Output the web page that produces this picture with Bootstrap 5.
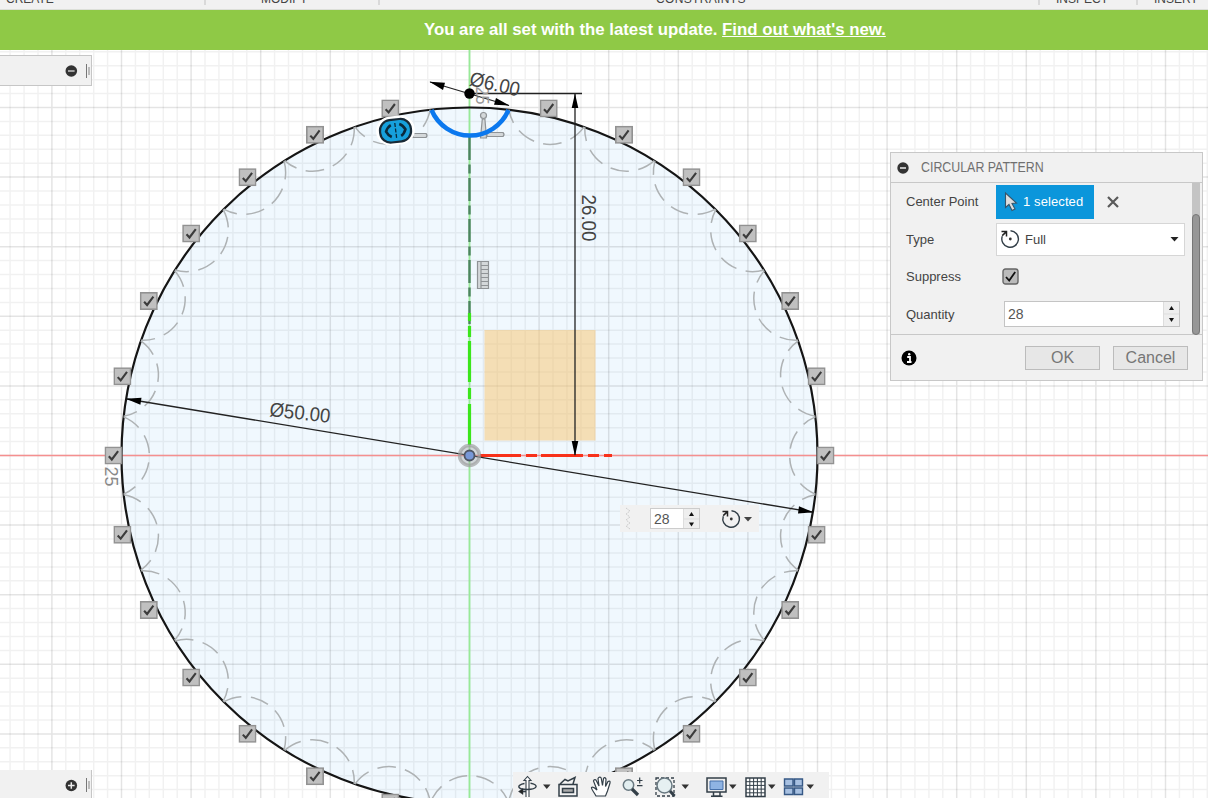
<!DOCTYPE html>
<html lang="en">
<head>
<meta charset="utf-8">
<title>Circular Pattern</title>
<link href="https://cdn.jsdelivr.net/npm/bootstrap@5.3.0/dist/css/bootstrap.min.css" rel="stylesheet">
<script src="https://cdn.jsdelivr.net/npm/bootstrap@5.3.0/dist/js/bootstrap.bundle.min.js"></script>
<style>
body{font-family:"Liberation Sans",Arial,sans-serif;font-size:12px;color:#444;background:#fff}
svg{display:block}
svg text{font-family:"Liberation Sans",Arial,sans-serif}
.ribbon{height:10px;background:#f1f1f1;font-size:12px;line-height:14px;border-bottom:1px solid #dcdfd8}
.ribbon span{display:block;margin-top:-8px}
.ribbon .sep{width:2px;height:5px;background:#d9d9d9;flex:none}
.notice{height:40px;background:#8fc946;color:#fff;font-size:16.8px;font-weight:bold;padding-left:424px;flex:none}
.notice a{color:#fff}
.side{left:0;width:92px;background:#f1f1f1;border:1px solid #c6c6c6;border-left:0}
.side.upper{top:5px;height:31px}
.side.lower{bottom:0;height:28px;border-top:0;border-bottom:0}
.dlg{left:890px;top:102px;width:313px;height:229px;background:#f1f1f1;border:1px solid #c8c8c8}
.dlg-head{height:30px;border-bottom:1px solid #c8c8c8;padding-left:6px;color:#707070;font-size:14px}
.dlg-head span{margin-left:12px;display:inline-block;transform:scaleX(.885);transform-origin:left;white-space:nowrap}
.dlg-body{height:152px;border-bottom:1px solid #c8c8c8;padding:0 0 0 15px}
.field{height:37.5px}
.field label{width:90px;flex:none;font-size:13px;white-space:nowrap}
.pick{width:98px;height:34px;background:#0b96db;color:#fff;padding-left:8px;font-size:13px;letter-spacing:.1px;white-space:nowrap}
.combo{width:189px;height:33px;background:#fff;border:1px solid #d6d6d6;padding:0 5px 0 3px;font-size:13px}
.spin{margin-left:8px;width:176px;height:26px;background:#fff;border:1px solid #c4c4c4;font-size:14px;color:#555}
.steps{width:16px;background:#eee;border-left:1px solid #ddd}
.track{right:2px;top:30px;width:8px;height:152px;background:#c4c4c4}
.track div{margin-top:31px;height:121px;background:#979797;border:1px solid #777;border-radius:4px}
.plain{width:75px;height:24px;background:#e7e7e7;border:1px solid #bcbcbc;color:#767676;font-size:16px;line-height:21px;padding:0;border-radius:0}
.mini{left:620px;top:455px;width:139px;height:27px;background:#f1f1f1;padding-left:5px}
.mini .num{width:50px;height:21px;background:#fff;border:1px solid #ccc;font-size:14px;line-height:18px;color:#555;margin-left:19px}
.navtools{left:513px;bottom:0;width:316px;height:26px;background:#f1f1f1}
</style>
</head>
<body class="vh-100 overflow-hidden d-flex flex-column">
<header class="ribbon d-flex overflow-hidden flex-shrink-0">
  <div class="d-flex" style="width:206px;padding-left:6px"><span class="me-auto">CREATE</span><i class="sep"></i></div>
  <div class="d-flex" style="width:174px;padding-left:55px"><span class="me-auto">MODIFY</span><i class="sep"></i></div>
  <div class="d-flex" style="width:660px;padding-left:276px"><span class="me-auto" style="letter-spacing:.35px">CONSTRAINTS</span><i class="sep"></i></div>
  <div class="d-flex" style="width:98px;padding-left:16px"><span class="me-auto">INSPECT</span><i class="sep"></i></div>
  <div style="padding-left:16px"><span>INSERT</span></div>
</header>
<div class="notice d-flex align-items-center text-nowrap"><div>You are all set with the latest update. <a href="#">Find out what's new.</a></div></div>

<main class="position-relative flex-grow-1 overflow-hidden">
<svg width="1208" height="748" viewBox="0 50 1208 748">
  <defs>
    <symbol id="tick" viewBox="0 0 18 18"><rect x=".8" y=".8" width="16.4" height="16.4" fill="#c0c0c0" stroke="#929292" stroke-width="1.6"/><path d="M4.300 9.800 7.300 13 13.600 4.600" fill="none" stroke="#3c3c3c" stroke-width="2.100"/></symbol>
  </defs>
  <circle cx="469.500" cy="455.500" r="348" fill="#f0f8fe"/>
  <g id="grid"></g>
  <path d="M0 455.500H1208" stroke="#f58f8f" stroke-width="1.500"/>
  <path d="M469.500 50V798" stroke="#98ea98" stroke-width="1.800"/>
  <rect x="484.500" y="330" width="111" height="110.500" fill="#f8c671" fill-opacity=".52"/>
  <circle cx="469.500" cy="455.500" r="348" fill="none" stroke="#151515" stroke-width="2.200"/>
  <g id="lobes" fill="none" stroke="#aeb2b4" stroke-width="1.500" stroke-dasharray="18.500 9.500" stroke-dashoffset="4.500"></g>
  <path d="M469.500 137V325" stroke="#4d8460" stroke-width="2.400" stroke-dasharray="23 4.500 9 4.500"/>
  <path d="M469.500 445V404M469.500 399V388M469.500 382V341M469.500 337V326M469.500 321V313" stroke="#3be61c" stroke-width="3.200"/>
  <path d="M480 455.500H521M526 455.500H537M541 455.500H583M588 455.500H599M604 455.500H612" stroke="#f8311a" stroke-width="3.200"/>

  <g stroke="#222" stroke-width="1.300" fill="#000">
    <path d="M127 399 812 512M575 94V455M470 93.500H582M430 82 509 105.500" fill="none"/>
    <g stroke="none">
      <path d="M126 398.800 141.500 397.700 140.400 404.800ZM813.500 512.300 798 513.400 799 506.300ZM575 93.500 578.300 108H571.700ZM575 456 571.700 441H578.300ZM429.500 81.800 445 82.800 443 90ZM509.500 105.600 494 104.800 496 98Z"/>
      <circle cx="469.500" cy="93.500" r="5.200"/>
    </g>
  </g>
  <g fill="#d4d8da" stroke="#8f9396" stroke-width="1.200">
    <circle cx="483.500" cy="115.500" r="3"/><path d="M482.300 119h2.600l1.600 19h-6ZM487 132.500h16q2 2 0 4h-16ZM413 133.500h13q2 2 0 4h-13Z"/>
    <path d="M477.500 261.500h11v27h-11Z"/><path d="M481 262v26M481 265.500h7M481 269.500h7M481 273.500h7M481 277.500h7M481 281.500h7M481 285.500h7"/>
  </g>
  <path d="M431.500 110A41.800 41.800 0 0 0 508.500 110" fill="none" stroke="#0b78ee" stroke-width="4.500"/>
  <circle cx="469.500" cy="455.500" r="10" fill="#999" fill-opacity=".35" stroke="#999" stroke-opacity=".65" stroke-width="3.500"/>
  <circle cx="469.500" cy="455.500" r="5" fill="#7898d8" stroke="#4e5564" stroke-width="1.800"/>
  <g id="ticks"></g>
  <g transform="rotate(-7 395.500 130.500)">
    <rect x="376" y="116" width="39" height="29" rx="14.500" fill="#fff"/>
    <rect x="380" y="119.500" width="31" height="22.500" rx="10.500" fill="#16a0dc" stroke="#182936" stroke-width="2.200"/>
    <path d="M391.500 124.500Q388 126 386 130.500 387.500 134.500 391 136.500M400 124.500Q403.500 126 405.500 130.500 403.500 135 400.500 136.500" fill="none" stroke="#0a2a3d" stroke-width="2.600"/><path d="M395.700 123V138" stroke="#0a2a3d" stroke-width="1.300" stroke-dasharray="4 1.500"/>
  </g>
  <g fill="#444">
    <text transform="translate(269 416) rotate(6.500)" font-size="20" textLength="61" lengthAdjust="spacingAndGlyphs">Ø50.00</text>
    <text transform="translate(582 194.500) rotate(90)" font-size="20" textLength="47" lengthAdjust="spacingAndGlyphs">26.00</text>
    <text transform="translate(105 466.500) rotate(90)" font-size="19" textLength="20" lengthAdjust="spacingAndGlyphs" fill="#888">25</text>
    <text transform="translate(475.500 86.500) rotate(90)" font-size="19" textLength="18" lengthAdjust="spacingAndGlyphs" fill="#999">25</text>
    <text transform="translate(468.500 85) rotate(13)" font-size="20" textLength="51" lengthAdjust="spacingAndGlyphs">Ø6.00</text>
  </g>
</svg>

<div class="side upper position-absolute d-flex align-items-center justify-content-end">
  <svg width="27" height="16" viewBox="0 0 27 16"><circle cx="7.300" cy="8" r="5.800" fill="#333"/><path d="M4 8h6.600" stroke="#ddd" stroke-width="1.300"/><path d="M22.500 1V15" stroke="#777"/><path d="M25 4V12" stroke="#aaa" stroke-width="1.500"/></svg>
</div>
<div class="side lower position-absolute d-flex align-items-center justify-content-end">
  <svg width="27" height="16" viewBox="0 0 27 16"><circle cx="7.300" cy="9.500" r="5.800" fill="#333"/><path d="M4 9.500h6.600M7.300 6.200v6.600" stroke="#eee" stroke-width="1.500"/><path d="M22.500 2V16" stroke="#777"/><path d="M25 5V13" stroke="#aaa" stroke-width="1.500"/></svg>
</div>

<section class="dlg position-absolute">
  <div class="dlg-head d-flex align-items-center"><svg width="12" height="12" viewBox="0 0 12 12"><circle cx="6" cy="6" r="5.700" fill="#333"/><path d="M3 6h6" stroke="#eee" stroke-width="1.500"/></svg><span>CIRCULAR PATTERN</span></div>
  <div class="dlg-body">
    <div class="field d-flex align-items-center"><label>Center Point</label>
      <div class="pick d-flex align-items-center gap-1"><svg width="15" height="21" viewBox="0 0 15 21"><path d="M1.500 2v14.500l3.500-3 3 6 3-1.500-3-5.500 4.500-.5Z" fill="#ddd" stroke="#34556b" stroke-width="1.100"/></svg>1 selected</div>
      <svg style="margin-left:13px" width="12" height="12" viewBox="0 0 12 12"><path d="M1 1 11 11M11 1 1 11" stroke="#5a5a5a" stroke-width="2.200"/></svg></div>
    <div class="field d-flex align-items-center"><label>Type</label>
      <div class="combo d-flex align-items-center"><svg width="20" height="20" viewBox="0 0 20 20"><use href="#cycle"/></svg><span class="me-auto" style="margin-left:5px">Full</span><svg width="9" height="6"><path d="M.5 1h8L4.500 5.500Z" fill="#222"/></svg></div></div>
    <div class="field d-flex align-items-center"><label>Suppress</label>
      <svg style="margin-left:6px" width="17" height="17" viewBox="0 0 17 17"><rect x="1" y="1" width="15" height="15" rx="2.500" fill="#bbb" stroke="#666" stroke-width="1.400"/><path d="M4 9 7.200 12.500 13.200 4" fill="none" stroke="#111" stroke-width="1.800"/></svg></div>
    <div class="field d-flex align-items-center"><label>Quantity</label>
      <div class="spin d-flex align-items-stretch"><span class="me-auto align-self-center" style="padding-left:3px">28</span><div class="steps"><svg width="15" height="24"><path d="M7.500 4 10 8H5ZM7.500 20 5 16h5Z" fill="#111"/><path d="M0 12h15" stroke="#ddd"/></svg></div></div></div>
  </div>
  <div class="track position-absolute"><div></div></div>
  <div class="d-flex align-items-center" style="height:45px;padding-left:10px">
    <svg class="me-auto" width="16" height="16" viewBox="0 0 16 16"><circle cx="8" cy="8" r="7.500" fill="#000"/><path d="M6.200 7H9V12M6 12h4.500" fill="none" stroke="#fff" stroke-width="1.800"/><circle cx="8.200" cy="4.200" r="1.200" fill="#fff"/></svg>
    <button class="plain btn">OK</button><button class="plain btn" style="margin:0 14px 0 13px">Cancel</button>
  </div>
</section>

<div class="mini position-absolute d-flex align-items-center">
  <svg width="6" height="26"><path d="M1 2 5 5 1 8 5 11 1 14 5 17 1 20 5 23" fill="none" stroke="#ccc" stroke-dasharray="2 1"/></svg>
  <div class="num d-flex"><span class="me-auto align-self-center" style="padding-left:3px">28</span><div class="steps"><svg width="15" height="19"><path d="M7.500 3 10 7H5ZM7.500 17.500 5 13.500h5Z" fill="#111"/><path d="M0 10h15" stroke="#ddd"/></svg></div></div>
  <svg style="margin-left:21px" width="20" height="20" viewBox="0 0 20 20"><g id="cycle"><path d="M10.500 1.700A8.300 8.300 0 1 1 2.300 7.200" fill="none" stroke="#333f48" stroke-width="1.400"/><path d="M1.500 2.600H6.500V7.400M6.200 2.900 2.200 6.600" fill="none" stroke="#222" stroke-width="1.500"/><circle cx="10.300" cy="10" r="1.400" fill="#333"/></g></svg>
  <svg style="margin-left:3px" width="8" height="6"><path d="M0 1h8L4 5.500Z" fill="#444"/></svg>
</div>

<div class="navtools position-absolute">
<svg width="316" height="26" viewBox="513 772 316 26">
  <g fill="none" stroke="#333f48" stroke-width="1.500">
    <path d="M526 797V780.500H524L527.500 776.500 531 780.500H529V797" fill="#fff" stroke-width="1.100"/>
    <path d="M524.500 783.500C516 785 517 789.500 527 789.500 538 789.500 539 784.500 530.500 783.300" stroke-width="1.400"/><path d="M526 791.500H520" stroke-width="1.600"/><path d="M523 788.500V794.500L518.500 791.500Z" fill="#222" stroke-width=".5"/>
    <path d="M559 784.500H577V796H559ZM560 784 565 779.500 568 781 575 777.500 573 784" fill="#f3f3f3"/><path d="M562.500 788.500H573.500V792.500H562.500Z" fill="#aaa"/>
    <path d="M596 796C594 792 591 789 591.500 787.500 593 786 595 788 597 790L593.500 781C594 779 596 779.500 596.500 781L599 786 598 778.500C599 776.500 601 777 601.300 778.500L602.500 785.500 603.500 778.500C604.500 777 606 778 606 779.500L605.500 786.500 608 781.500C609.500 780.500 610.500 781.500 610 783L607.500 791 605.500 796Z" fill="#fff" stroke-width="1.200"/>
    <circle cx="628.500" cy="785" r="5.200" fill="#e2eef0" stroke="#687880"/><path d="M632 789 638 795" stroke-width="3.200"/><path d="M637 780.500H642.500M639.700 777.500V783.500M637 785.700H642.500" stroke-width="1.200"/>
    <path d="M656 778H674V796H656Z" stroke-dasharray="3 2" stroke-width="1.300"/><circle cx="664.500" cy="785.500" r="7.500" fill="#e6f0f2" stroke="#687880"/><path d="M670 791 674.500 796" stroke-width="3"/>
    <path d="M707 778H726V792H707Z" fill="#eee"/><path d="M710 781H723V789.500H710Z" fill="#8fb4e3" stroke="#4771aa" stroke-width="1"/><path d="M713.500 792V796H720V792M711 796.200H722.500"/>
    <path d="M746 778H765V796.500H746Z" fill="#fff"/><path d="M749.800 778V797M753.600 778V797M757.400 778V797M761.200 778V797M746 781.700H765M746 785.400H765M746 789.100H765M746 792.800H765" stroke-width="1"/>
    <path d="M784.500 779H793V786H784.500ZM794.500 779H802.500V786H794.500ZM784.500 788H793V794.500H784.500ZM794.500 788H802.500V794.500H794.500Z" fill="#a7c0e1" stroke="#365885" stroke-width="1.400"/>
  </g>
  <path d="M543 784.500h7.500l-3.700 4.500ZM681.500 784.500h7.500l-3.700 4.500ZM729 784.500h7.500l-3.700 4.500ZM768 784.500h7.500l-3.700 4.500ZM806.500 784.500h7.500l-3.700 4.500Z" fill="#333"/>
</svg>
</div>
</main>
<script>
const CX=469.5, CY=455.5, UNIT=13.92, N=28;
let minor='', major='';
for(let i=-34;i<=54;i++){
  const x=(CX+i*UNIT).toFixed(1), y=(CY+i*UNIT).toFixed(1);
  const v=`M${x} 50V798`, h=`M0 ${y}H1208`;
  if(i%5===0){major+=v+h}else{minor+=v+h}
}
document.getElementById('grid').innerHTML=`<path d="${minor}" stroke="#000" stroke-opacity=".055" stroke-width="1.500"/><path d="${major}" stroke="#000" stroke-opacity=".105" stroke-width="1.500"/>`;
let lobes='', ticks='';
for(let k=1;k<N;k++){
  const a=k*360/N, r=a*Math.PI/180;
  lobes+=`<path d="M430.9 109.6A41.8 41.8 0 0 0 508.1 109.6" transform="rotate(${a} ${CX} ${CY})"/>`;
  ticks+=`<use href="#tick" x="${(CX+356*Math.sin(r)-9).toFixed(1)}" y="${(CY-356*Math.cos(r)-9).toFixed(1)}" width="18" height="18"/>`;
}
document.getElementById('lobes').innerHTML=lobes;
document.getElementById('ticks').innerHTML=ticks;
</script>
</body>
</html>
